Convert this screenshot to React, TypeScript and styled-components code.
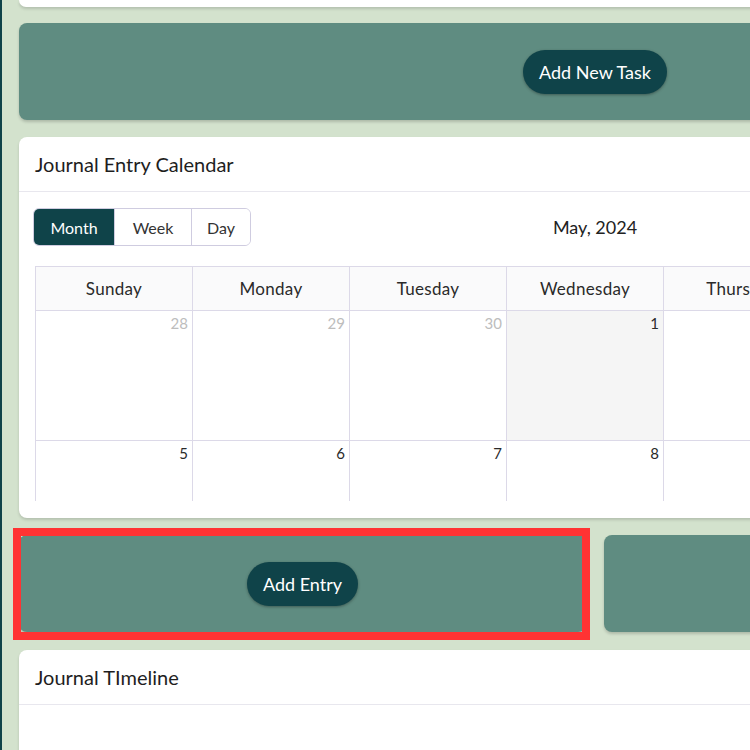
import React from "react";
import styled, { createGlobalStyle } from "styled-components";

const GlobalStyle = createGlobalStyle`
  html, body { margin: 0; padding: 0; }
  body {
    background: #d3e2cd;
    overflow: hidden;
    font-family: "Lato", "Open Sans", sans-serif;
    color: #222;
  }
`;

const Page = styled.div`
  display: flex;
  min-height: 750px;
`;

const SideEdge = styled.div`
  width: 2px;
  flex: none;
  background: #0f4349;
`;

const Main = styled.main`
  flex: none;
  width: 1152px;
  padding-left: 17px;
  display: flex;
  flex-direction: column;
`;

const CardTail = styled.div`
  height: 7px;
  background: #fff;
  border-radius: 0 0 8px 8px;
  box-shadow: 0 2px 3px rgba(0, 0, 0, 0.15);
`;

const Panel = styled.section<{ $highlight?: boolean }>`
  position: relative;
  height: 97px;
  background: #5f8c81;
  border-radius: 8px;
  box-shadow: 0 2px 3px rgba(0, 0, 0, 0.18);
  display: flex;
  align-items: center;
  justify-content: center;
  &::after {
    content: "";
    display: ${(p) => (p.$highlight ? "block" : "none")};
    position: absolute;
    top: -7px;
    left: -6px;
    right: -4px;
    bottom: -8px;
    border: 8px solid #ff3333;
    pointer-events: none;
  }
`;

const PillButton = styled.button`
  height: 44px;
  padding: 0 16px;
  border: none;
  border-radius: 22px;
  background: #0f4349;
  color: #fff;
  font-family: inherit;
  font-size: 18px;
  box-shadow: 0 1px 3px rgba(0, 0, 0, 0.35);
  cursor: pointer;
`;

const Card = styled.section`
  background: #fff;
  border-radius: 8px;
  box-shadow: 0 2px 3px rgba(0, 0, 0, 0.15);
  overflow: hidden;
`;

const CardHeader = styled.header`
  height: 55px;
  box-sizing: border-box;
  padding: 0 16px;
  display: flex;
  align-items: center;
  font-size: 20px;
  color: #1e1e1e;
  border-bottom: 1px solid #e8e7ee;
`;

const CardBody = styled.div`
  padding: 16px 16px 17px 16px;
`;

const Toolbar = styled.div`
  display: grid;
  grid-template-columns: 1fr auto 1fr;
  align-items: center;
  margin: 0 0 20px -2px;
`;

const ButtonGroup = styled.div`
  display: flex;
  justify-self: start;
  border: 1px solid #cfcce0;
  border-radius: 6px;
  overflow: hidden;
  height: 38px;
  box-sizing: border-box;
`;

const GroupButton = styled.button<{ $active?: boolean; $w: number }>`
  width: ${(p) => p.$w}px;
  border: none;
  border-left: 1px solid #cfcce0;
  &:first-child { border-left: none; }
  background: ${(p) => (p.$active ? "#0f4349" : "#fff")};
  color: ${(p) => (p.$active ? "#fff" : "#333")};
  font-family: inherit;
  font-size: 16px;
  padding: 0;
`;

const MonthTitle = styled.div`
  font-size: 18px;
  color: #222;
  margin-left: 2px;
`;

const CalendarViewport = styled.div`
  height: 235px;
  overflow: hidden;
`;

const Grid = styled.div`
  display: grid;
  grid-template-columns: repeat(7, 157px);
  border-left: 1px solid #dcd9e8;
  border-top: 1px solid #dcd9e8;
  width: max-content;
`;

const HeadCell = styled.div`
  height: 43px;
  display: flex;
  align-items: center;
  justify-content: center;
  font-size: 17px;
  color: #2a2a2a;
  letter-spacing: 0.3px;
  background: #fafafb;
  border-right: 1px solid #dcd9e8;
  border-bottom: 1px solid #dcd9e8;
`;

const DayCell = styled.div<{ $muted?: boolean; $today?: boolean }>`
  height: 126px;
  padding: 3px 4px 0 0;
  text-align: right;
  font-size: 15px;
  color: ${(p) => (p.$muted ? "#bdbdbd" : "#2a2a2a")};
  background: ${(p) => (p.$today ? "#f5f5f5" : "#fff")};
  border-right: 1px solid #dcd9e8;
  border-bottom: 1px solid #dcd9e8;
`;

const Row = styled.div`
  display: grid;
  grid-template-columns: 1fr 1fr;
  gap: 18px;
`;

const days = ["Sunday", "Monday", "Tuesday", "Wednesday", "Thursday", "Friday", "Saturday"];

const cells: { n: number; muted?: boolean; today?: boolean }[] = [
  { n: 28, muted: true },
  { n: 29, muted: true },
  { n: 30, muted: true },
  { n: 1, today: true },
  { n: 2 },
  { n: 3 },
  { n: 4 },
  { n: 5 },
  { n: 6 },
  { n: 7 },
  { n: 8 },
  { n: 9 },
  { n: 10 },
  { n: 11 },
];

export default function App() {
  return (
    <>
      <GlobalStyle />
      <Page>
        <SideEdge />
        <Main>
          <CardTail />
          <Panel style={{ marginTop: 16 }}>
            <PillButton>Add New Task</PillButton>
          </Panel>
          <Card style={{ marginTop: 17 }}>
            <CardHeader>Journal Entry Calendar</CardHeader>
            <CardBody>
              <Toolbar>
                <ButtonGroup>
                  <GroupButton $active $w={80}>Month</GroupButton>
                  <GroupButton $w={77}>Week</GroupButton>
                  <GroupButton $w={59}>Day</GroupButton>
                </ButtonGroup>
                <MonthTitle>May, 2024</MonthTitle>
                <div />
              </Toolbar>
              <CalendarViewport>
                <Grid>
                  {days.map((d) => (
                    <HeadCell key={d}>{d}</HeadCell>
                  ))}
                  {cells.map((c, i) => (
                    <DayCell key={i} $muted={c.muted} $today={c.today}>
                      {c.n}
                    </DayCell>
                  ))}
                </Grid>
              </CalendarViewport>
            </CardBody>
          </Card>
          <Row style={{ marginTop: 17 }}>
            <Panel $highlight>
              <PillButton>Add Entry</PillButton>
            </Panel>
            <Panel />
          </Row>
          <Card style={{ marginTop: 18, height: 200 }}>
            <CardHeader>Journal TImeline</CardHeader>
          </Card>
        </Main>
      </Page>
    </>
  );
}
